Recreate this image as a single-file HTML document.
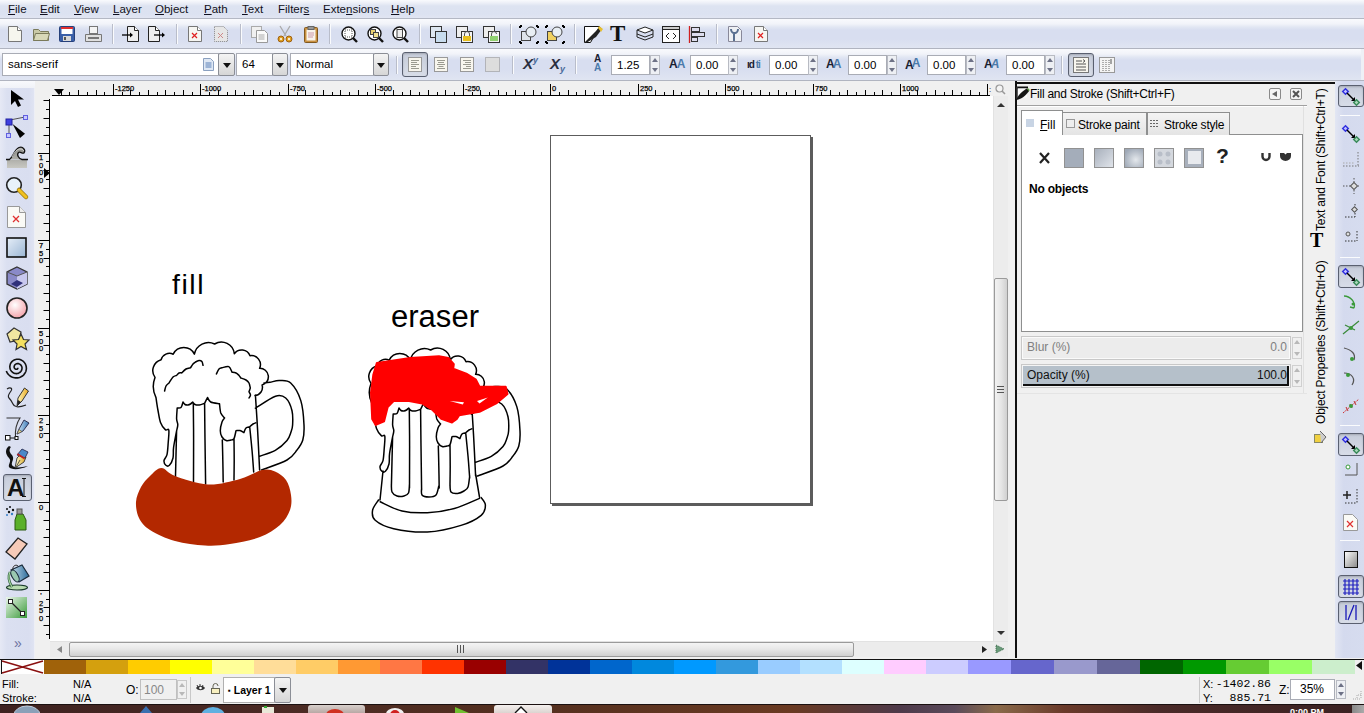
<!DOCTYPE html>
<html><head><meta charset="utf-8"><style>
*{box-sizing:border-box}
body{margin:0;width:1364px;height:713px;overflow:hidden;position:relative;background:#f0f0f0;font-family:"Liberation Sans",sans-serif;font-size:11px;color:#000}
.a{position:absolute}
svg.a{overflow:visible}
.menubar{left:0;top:0;width:1364px;height:19px;background:linear-gradient(#f9fafd 0px,#eceff7 3px,#dde3f1 6px,#dce2f1 14px,#e1e5f2 18px);border-bottom:1px solid #b4b8c4}
.menubar span{position:absolute;top:3px;font-size:11.5px;color:#101020;white-space:nowrap}
.tb{left:0;width:1364px;background:linear-gradient(#f9fafd 0px,#f1f3f9 5px,#e2e7f3 8px,#d8def0 11px,#d8def0 20px,#e0e5f2 100%);border-bottom:1px solid #b0b4c0}
.sep{position:absolute;width:2px;border-left:1px solid #b9bdca;border-right:1px solid #fafbfd}
.entry{position:absolute;background:#fff;border:1px solid #a9acb5;font-size:11.5px;padding-left:5px;white-space:nowrap;overflow:hidden}
.ddb{position:absolute;border:1px solid #8b8e96;background:linear-gradient(#f4f4f4,#d6d6d6);border-radius:2px}
.ddb:after{content:"";position:absolute;left:50%;top:50%;margin-left:-4px;margin-top:-2px;border-left:4px solid transparent;border-right:4px solid transparent;border-top:5px solid #111}
.spin{position:absolute;width:10px;border:1px solid #b8bbc3;background:#eef0f4}
.spin:before{content:"";position:absolute;left:1px;top:2px;border-left:3px solid transparent;border-right:3px solid transparent;border-bottom:4px solid #6d7186}
.spin:after{content:"";position:absolute;left:1px;bottom:2px;border-left:3px solid transparent;border-right:3px solid transparent;border-top:4px solid #6d7186}
.pressed{position:absolute;border:1px solid #5a6070;border-radius:3px;background:linear-gradient(#c6ccda,#d8dde8);box-shadow:inset 0 1px 2px rgba(0,0,0,.18)}
.spinl:before{border-bottom-color:#b8b8b8!important}.spinl:after{border-top-color:#b8b8b8!important}
.mono{font-family:"Liberation Mono",monospace}
.rl{position:absolute;font-size:7.5px;line-height:8px;color:#000;-webkit-text-stroke:0.25px #000}
</style></head><body>

<div class="a menubar">
<span style="left:8px"><u>F</u>ile</span>
<span style="left:40px"><u>E</u>dit</span>
<span style="left:74px"><u>V</u>iew</span>
<span style="left:113px"><u>L</u>ayer</span>
<span style="left:155px"><u>O</u>bject</span>
<span style="left:204px"><u>P</u>ath</span>
<span style="left:242px"><u>T</u>ext</span>
<span style="left:278px">Filter<u>s</u></span>
<span style="left:323px">Exte<u>n</u>sions</span>
<span style="left:391px"><u>H</u>elp</span>
</div>
<div class="a tb" style="top:19px;height:30px"></div>
<div class="a tb" style="top:49px;height:32px"></div>
<div class="sep" style="left:112px;top:24px;height:20px"></div>
<div class="sep" style="left:176px;top:24px;height:20px"></div>
<div class="sep" style="left:240px;top:24px;height:20px"></div>
<div class="sep" style="left:329px;top:24px;height:20px"></div>
<div class="sep" style="left:419px;top:24px;height:20px"></div>
<div class="sep" style="left:510px;top:24px;height:20px"></div>
<div class="sep" style="left:574px;top:24px;height:20px"></div>
<div class="sep" style="left:716px;top:24px;height:20px"></div>
<svg class="a" style="left:7px;top:26px" width="16" height="17" viewBox="0 0 16 17"><path d="M1.5 .5h9l4 4v11h-13z" fill="#f6f6ee" stroke="#777" /><path d="M10.5 .5v4h4" fill="#fff" stroke="#777"/></svg>
<svg class="a" style="left:33px;top:27px" width="17" height="15" viewBox="0 0 17 15"><path d="M.5 2.5v11h15v-9h-8l-2-2z" fill="#c9c9a6" stroke="#7a7a5a"/><path d="M.5 13.5l2-7h14l-2 7z" fill="#d8d8b8" stroke="#7a7a5a"/></svg>
<svg class="a" style="left:59px;top:26px" width="16" height="16" viewBox="0 0 16 16"><rect x=".5" y=".5" width="15" height="15" rx="1" fill="#3a5fa8" stroke="#26407a"/><rect x="2" y="1" width="12" height="2" fill="#e03030"/><rect x="2.5" y="3" width="11" height="5" fill="#fff"/><rect x="4" y="10" width="8" height="5" fill="#d8d8d8"/><rect x="5" y="11" width="2" height="3" fill="#555"/></svg>
<svg class="a" style="left:85px;top:26px" width="17" height="16" viewBox="0 0 17 16"><rect x="4.5" y=".5" width="8" height="7" fill="#f4f4f4" stroke="#777"/><path d="M.5 8.5h16v7h-16z" fill="#e0e0e0" stroke="#777"/><path d="M3 12h11" stroke="#555" stroke-width="1.5"/></svg>
<svg class="a" style="left:122px;top:26px" width="18" height="17" viewBox="0 0 18 17"><path d="M5.5 .5h7l4 4v11h-11z" fill="#eee" stroke="#222"/><path d="M12.5 .5v4h4" fill="#fff" stroke="#222"/><path d="M0 9h9" stroke="#000" stroke-width="1.3"/><path d="M8 6.5l3 2.5-3 2.5z" fill="#000"/></svg>
<svg class="a" style="left:148px;top:26px" width="18" height="17" viewBox="0 0 18 17"><path d="M.5 .5h7l4 4v11h-11z" fill="#eee" stroke="#222"/><path d="M7.5 .5v4h4" fill="#fff" stroke="#222"/><path d="M6 9h9" stroke="#000" stroke-width="1.3"/><path d="M14 6.5l3 2.5-3 2.5z" fill="#000"/></svg>
<svg class="a" style="left:187px;top:26px" width="16" height="17" viewBox="0 0 16 17"><path d="M1.5 .5h9l4 4v11h-13z" fill="#f6f6f2" stroke="#777" /><path d="M10.5 .5v4h4" fill="#fff" stroke="#777"/><path d="M5 7l5 5M10 7l-5 5" stroke="#e02020" stroke-width="1.2"/></svg>
<svg class="a" style="left:213px;top:26px" width="16" height="17" viewBox="0 0 16 17"><path d="M1.5 .5h9l4 4v11h-13z" fill="#e6e6e6" stroke="#888" stroke-dasharray="1 1"/><path d="M5 7l5 5M10 7l-5 5" stroke="#c88" stroke-width="1"/></svg>
<svg class="a" style="left:251px;top:26px" width="17" height="17" viewBox="0 0 17 17"><rect x=".5" y=".5" width="10" height="11" fill="#f0f0f0" stroke="#aaa"/><path d="M5.5 4.5h8l3 3v9h-11z" fill="#fafafa" stroke="#999"/><path d="M7.5 9h6M7.5 11h6M7.5 13h6" stroke="#aaa"/></svg>
<svg class="a" style="left:277px;top:26px" width="16" height="17" viewBox="0 0 16 17"><path d="M3 0l6 10M13 0l-6 10" stroke="#aaa" stroke-width="1.3"/><circle cx="4" cy="13" r="3" fill="#e0a020" stroke="#a06010"/><circle cx="12" cy="13" r="3" fill="#e0a020" stroke="#a06010"/><circle cx="4" cy="13" r="1" fill="#fff"/><circle cx="12" cy="13" r="1" fill="#fff"/></svg>
<svg class="a" style="left:303px;top:26px" width="16" height="17" viewBox="0 0 16 17"><rect x="1.5" y="1.5" width="13" height="15" rx="1" fill="#c89040" stroke="#805820"/><rect x="3.5" y="3.5" width="9" height="11" fill="#f8f4ec"/><rect x="5" y=".5" width="6" height="3" fill="#999" stroke="#666"/><path d="M5 7h6M5 9h6M5 11h5" stroke="#c9a"/></svg>
<svg class="a" style="left:341px;top:26px" width="17" height="17" viewBox="0 0 17 17"><circle cx="7.5" cy="7.5" r="6.5" fill="#fff" stroke="#111" stroke-width="1.4"/><rect x="4" y="4" width="7" height="7" fill="none" stroke="#555" stroke-dasharray="1 1"/><path d="M12 12l4 4" stroke="#111" stroke-width="2.4"/></svg>
<svg class="a" style="left:367px;top:26px" width="17" height="17" viewBox="0 0 17 17"><circle cx="7.5" cy="7.5" r="6.5" fill="#fff" stroke="#111" stroke-width="1.4"/><rect x="3.5" y="3.5" width="5" height="5" fill="#e8d070" stroke="#444"/><rect x="6.5" y="6.5" width="5" height="5" fill="#f0e090" stroke="#444"/><path d="M12 12l4 4" stroke="#111" stroke-width="2.4"/></svg>
<svg class="a" style="left:392px;top:26px" width="17" height="17" viewBox="0 0 17 17"><circle cx="7.5" cy="7.5" r="6.5" fill="#fff" stroke="#111" stroke-width="1.4"/><rect x="5" y="3.5" width="5.5" height="8" fill="#eee" stroke="#444"/><path d="M12 12l4 4" stroke="#111" stroke-width="2.4"/></svg>
<svg class="a" style="left:430px;top:26px" width="18" height="17" viewBox="0 0 18 17"><rect x=".5" y=".5" width="11" height="11" fill="#dde6f0" stroke="#333"/><rect x="5.5" y="5.5" width="11" height="11" fill="#c8dcee" stroke="#333"/></svg>
<svg class="a" style="left:456px;top:26px" width="18" height="17" viewBox="0 0 18 17"><rect x=".5" y=".5" width="11" height="11" fill="#eee" stroke="#333"/><rect x="5.5" y="5.5" width="11" height="11" fill="#f4f4f4" stroke="#333"/><rect x="7" y="10" width="8" height="5" fill="#e8c020"/><path d="M8.5 10v-2a2.5 2.5 0 0 1 5 0v2" fill="none" stroke="#555"/></svg>
<svg class="a" style="left:483px;top:26px" width="18" height="17" viewBox="0 0 18 17"><rect x=".5" y=".5" width="11" height="11" fill="#eee" stroke="#333"/><rect x="5.5" y="5.5" width="11" height="11" fill="#f4f4f4" stroke="#333"/><rect x="7" y="10" width="8" height="5" fill="#90d070"/><path d="M8.5 10v-2a2.5 2.5 0 0 1 5 0" fill="none" stroke="#555"/></svg>
<svg class="a" style="left:520px;top:26px" width="18" height="17" viewBox="0 0 18 17"><rect x="1.5" y="5.5" width="9" height="9" fill="#dfe4ea" stroke="#444"/><circle cx="11" cy="6" r="5" fill="#e8eef4" stroke="#444"/><path d="M0 0h2M0 0v2M16 0h2M18 0v2M0 17h2M0 15v2M16 17h2M18 15v2" stroke="#000" stroke-width="2"/></svg>
<svg class="a" style="left:546px;top:26px" width="18" height="17" viewBox="0 0 18 17"><rect x="1.5" y="5.5" width="9" height="9" fill="#f0d060" stroke="#444"/><circle cx="11" cy="6" r="5" fill="#e8eef4" stroke="#444"/><path d="M0 0h2M0 0v2M16 0h2M18 0v2M0 17h2M0 15v2M16 17h2M18 15v2" stroke="#000" stroke-width="2"/></svg>
<svg class="a" style="left:584px;top:26px" width="19" height="17" viewBox="0 0 19 17"><path d="M.5 .5h15l-9 16h-6z" fill="#fff" stroke="#111"/><path d="M1 16l10-10 5 -5 2 2-6 8-10 6z" fill="#222"/><path d="M15 0l4 3-2 3-3-4z" fill="#e8c030"/></svg>
<div class="a" style="left:610px;top:22px;font-family:'Liberation Serif',serif;font-weight:bold;font-size:23px;line-height:23px;color:#111">T</div>
<svg class="a" style="left:636px;top:27px" width="18" height="15" viewBox="0 0 18 15"><path d="M1 3l8-3 8 3-8 3z" fill="#fff" stroke="#222"/><path d="M1 7l8 3 8-3M1 10l8 3 8-3M1 3v7M17 3v7" fill="none" stroke="#222"/></svg>
<svg class="a" style="left:662px;top:26px" width="18" height="17" viewBox="0 0 18 17"><rect x=".5" y=".5" width="17" height="16" fill="#fff" stroke="#222"/><rect x=".5" y=".5" width="17" height="3" fill="#ccc" stroke="#222"/><path d="M7 7l-3 3 3 3M11 7l3 3-3 3" fill="none" stroke="#222"/></svg>
<svg class="a" style="left:688px;top:26px" width="18" height="17" viewBox="0 0 18 17"><path d="M1.5 0v17" stroke="#d02020" stroke-width="1.3"/><rect x="3.5" y="1.5" width="8" height="4" fill="#dde" stroke="#333"/><rect x="3.5" y="6.5" width="13" height="4" fill="#dde" stroke="#333"/><rect x="3.5" y="11.5" width="6" height="4" fill="#dde" stroke="#333"/></svg>
<svg class="a" style="left:727px;top:26px" width="16" height="17" viewBox="0 0 16 17"><path d="M1.5 .5h9l4 4v11h-13z" fill="#eef0f4" stroke="#889"/><path d="M4 3c0 3 2 4 3 4v8M11 3c0 3-2 4-3 4" fill="none" stroke="#5a7090" stroke-width="2"/></svg>
<svg class="a" style="left:753px;top:26px" width="16" height="17" viewBox="0 0 16 17"><path d="M1.5 .5h9l4 4v11h-13z" fill="#f6f6f2" stroke="#777" /><path d="M10.5 .5v4h4" fill="#fff" stroke="#777"/><path d="M5 7l5 5M10 7l-5 5" stroke="#e02020" stroke-width="1.2"/></svg>
<div class="a" style="left:1361px;top:49px;width:3px;height:31px;background:#eef0f6"></div>
<div class="entry" style="left:2px;top:53px;width:217px;height:23px;line-height:21px">sans-serif</div>
<svg class="a" style="left:203px;top:58px" width="11" height="13" viewBox="0 0 11 13"><path d="M.5 .5h7l3 3v9h-10z" fill="#dfe8f4" stroke="#8aa0c0"/><path d="M2.5 5h6M2.5 7h6M2.5 9h6" stroke="#5a80b8"/></svg>
<div class="ddb" style="left:218px;top:53px;width:17px;height:23px"></div>
<div class="entry" style="left:236px;top:53px;width:37px;height:23px;line-height:21px">64</div>
<div class="ddb" style="left:272px;top:53px;width:16px;height:23px"></div>
<div class="entry" style="left:290px;top:53px;width:84px;height:23px;line-height:21px">Normal</div>
<div class="ddb" style="left:373px;top:53px;width:16px;height:23px"></div>
<div class="sep" style="left:396px;top:56px;height:18px"></div>
<div class="sep" style="left:512px;top:56px;height:18px"></div>
<div class="sep" style="left:575px;top:56px;height:18px"></div>
<div class="sep" style="left:1061px;top:56px;height:18px"></div>
<div class="pressed" style="left:402px;top:52px;width:26px;height:25px"></div>
<svg class="a" style="left:408px;top:57px" width="14" height="15" viewBox="0 0 14 15"><rect x=".5" y=".5" width="13" height="14" fill="#f8f6ee" stroke="#999"/><path d="M3 3.5h8" stroke="#9a9a90"/><path d="M3 5.5h6" stroke="#9a9a90"/><path d="M3 7.5h8" stroke="#9a9a90"/><path d="M3 9.5h5" stroke="#9a9a90"/><path d="M3 11.5h8" stroke="#9a9a90"/></svg>
<svg class="a" style="left:434px;top:57px" width="14" height="15" viewBox="0 0 14 15"><rect x=".5" y=".5" width="13" height="14" fill="#f8f6ee" stroke="#999"/><path d="M3 3.5h8" stroke="#9a9a90"/><path d="M4 5.5h6" stroke="#9a9a90"/><path d="M3 7.5h8" stroke="#9a9a90"/><path d="M4.5 9.5h5" stroke="#9a9a90"/><path d="M3 11.5h8" stroke="#9a9a90"/></svg>
<svg class="a" style="left:460px;top:57px" width="14" height="15" viewBox="0 0 14 15"><rect x=".5" y=".5" width="13" height="14" fill="#f8f6ee" stroke="#999"/><path d="M3 3.5h8" stroke="#9a9a90"/><path d="M5 5.5h6" stroke="#9a9a90"/><path d="M3 7.5h8" stroke="#9a9a90"/><path d="M6 9.5h5" stroke="#9a9a90"/><path d="M3 11.5h8" stroke="#9a9a90"/></svg>
<svg class="a" style="left:485px;top:57px" width="15" height="15" viewBox="0 0 15 15"><rect x=".5" y=".5" width="14" height="14" fill="#ddd" stroke="#888" stroke-dasharray="1 1"/></svg>
<div class="a" style="left:523px;top:55px;font-weight:bold;font-style:italic;font-size:15px;color:#2a2f40">X<sup style="font-size:9px;color:#4a6a9a;vertical-align:6px">y</sup></div>
<div class="a" style="left:550px;top:55px;font-weight:bold;font-style:italic;font-size:15px;color:#2a2f40">X<sub style="font-size:9px;color:#4a6a9a;vertical-align:-3px">y</sub></div>
<div class="a" style="left:594px;top:54px;font-weight:bold;font-size:10px;line-height:9px;color:#1a2030">A<br><span style="color:#4a7aaa">A</span></div>
<div class="a" style="left:669px;top:57px;font-weight:bold;font-size:12px;color:#1a2030;letter-spacing:-1px">A<span style="color:#4a7aaa">A</span></div>
<div class="a" style="left:747px;top:59px;font-weight:bold;font-size:10px;color:#1a2030;letter-spacing:-1px">ıd <span style="color:#4a7aaa">ti</span></div>
<div class="a" style="left:826px;top:57px;font-weight:bold;font-size:12px;color:#1a2030;letter-spacing:-2px">A<span style="color:#4a7aaa">A</span></div>
<div class="a" style="left:905px;top:56px;font-weight:bold;font-size:12px;color:#1a2030;letter-spacing:-2px">A<span style="color:#4a7aaa;vertical-align:2px">A</span></div>
<div class="a" style="left:984px;top:57px;font-weight:bold;font-size:12px;color:#1a2030;letter-spacing:-2px">A<span style="color:#4a7aaa;font-style:italic">A</span></div>
<div class="entry" style="left:611px;top:55px;width:39px;height:20px;line-height:18px">1.25</div>
<div class="spin" style="left:650px;top:55px;height:20px"></div>
<div class="entry" style="left:690px;top:55px;width:39px;height:20px;line-height:18px">0.00</div>
<div class="spin" style="left:728px;top:55px;height:20px"></div>
<div class="entry" style="left:769px;top:55px;width:40px;height:20px;line-height:18px">0.00</div>
<div class="spin" style="left:808px;top:55px;height:20px"></div>
<div class="entry" style="left:848px;top:55px;width:39px;height:20px;line-height:18px">0.00</div>
<div class="spin" style="left:887px;top:55px;height:20px"></div>
<div class="entry" style="left:927px;top:55px;width:39px;height:20px;line-height:18px">0.00</div>
<div class="spin" style="left:966px;top:55px;height:20px"></div>
<div class="entry" style="left:1006px;top:55px;width:39px;height:20px;line-height:18px">0.00</div>
<div class="spin" style="left:1045px;top:55px;height:20px"></div>
<div class="pressed" style="left:1068px;top:53px;width:26px;height:24px"></div>
<svg class="a" style="left:1073px;top:57px" width="16" height="16" viewBox="0 0 16 16"><rect x=".5" y=".5" width="15" height="15" fill="#f8f6ee" stroke="#777"/><path d="M3 4h6M3 7h10M3 10h10M3 13h10" stroke="#555"/><path d="M10 2.5l2 1.5-2 1.5" fill="none" stroke="#555"/></svg>
<svg class="a" style="left:1099px;top:57px" width="16" height="16" viewBox="0 0 16 16"><rect x=".5" y=".5" width="15" height="15" fill="#f4f4f4" stroke="#999"/><path d="M4 3v11M7 3v11M10 3v11" stroke="#666" stroke-dasharray="1 1"/><path d="M12 2v5" stroke="#555"/></svg>
<div class="a" style="left:0;top:81px;width:35px;height:7px;background:linear-gradient(#f8f9fc,#f0f2f8)"></div>
<div class="a" style="left:0;top:88px;width:34px;height:571px;background:linear-gradient(90deg,#e6e9f5,#dbe0f1 20%,#d9def0 85%,#e0e4f2)"></div>
<div class="a" style="left:34px;top:88px;width:3px;height:571px;background:linear-gradient(90deg,#eceef6,#f2f2f4)"></div>
<div class="a" style="left:35px;top:81px;width:980px;height:578px;background:#f0f0f0"></div>
<div class="a" style="left:50px;top:96px;width:943px;height:545px;background:#fff"></div>
<svg class="a" style="left:50px;top:81px" width="945" height="16" viewBox="0 0 945 16"><path d="M2 95.5H940" transform="translate(0,-81)" stroke="#000"/><path d="M11.5 90V95 M19.5 92V95 M28.5 90V95 M37.5 92V95 M46.5 90V95 M54.5 92V95 M63.5 84V95 M72.5 92V95 M80.5 90V95 M89.5 92V95 M98.5 90V95 M107.5 92V95 M115.5 90V95 M124.5 92V95 M133.5 90V95 M142.5 92V95 M150.5 84V95 M159.5 92V95 M168.5 90V95 M177.5 92V95 M185.5 90V95 M194.5 92V95 M203.5 90V95 M212.5 92V95 M220.5 90V95 M229.5 92V95 M238.5 84V95 M247.5 92V95 M255.5 90V95 M264.5 92V95 M273.5 90V95 M282.5 92V95 M290.5 90V95 M299.5 92V95 M308.5 90V95 M317.5 92V95 M325.5 84V95 M334.5 92V95 M343.5 90V95 M352.5 92V95 M360.5 90V95 M369.5 92V95 M378.5 90V95 M387.5 92V95 M395.5 90V95 M404.5 92V95 M413.5 84V95 M422.5 92V95 M430.5 90V95 M439.5 92V95 M448.5 90V95 M456.5 92V95 M465.5 90V95 M474.5 92V95 M483.5 90V95 M491.5 92V95 M500.5 84V95 M509.5 92V95 M518.5 90V95 M526.5 92V95 M535.5 90V95 M544.5 92V95 M553.5 90V95 M561.5 92V95 M570.5 90V95 M579.5 92V95 M588.5 84V95 M596.5 92V95 M605.5 90V95 M614.5 92V95 M623.5 90V95 M631.5 92V95 M640.5 90V95 M649.5 92V95 M658.5 90V95 M666.5 92V95 M675.5 84V95 M684.5 92V95 M693.5 90V95 M701.5 92V95 M710.5 90V95 M719.5 92V95 M728.5 90V95 M736.5 92V95 M745.5 90V95 M754.5 92V95 M763.5 84V95 M771.5 92V95 M780.5 90V95 M789.5 92V95 M797.5 90V95 M806.5 92V95 M815.5 90V95 M824.5 92V95 M832.5 90V95 M841.5 92V95 M850.5 84V95 M859.5 92V95 M867.5 90V95 M876.5 92V95 M885.5 90V95 M894.5 92V95 M902.5 90V95 M911.5 92V95 M920.5 90V95 M929.5 92V95 M937.5 84V95" transform="translate(0,-81)" stroke="#000"/></svg>
<div class="rl" style="left:115px;top:85px">-1250</div>
<div class="rl" style="left:202px;top:85px">-1000</div>
<div class="rl" style="left:290px;top:85px">-750</div>
<div class="rl" style="left:377px;top:85px">-500</div>
<div class="rl" style="left:465px;top:85px">-250</div>
<div class="rl" style="left:552px;top:85px">0</div>
<div class="rl" style="left:640px;top:85px">250</div>
<div class="rl" style="left:727px;top:85px">500</div>
<div class="rl" style="left:815px;top:85px">750</div>
<div class="rl" style="left:902px;top:85px">1000</div>
<svg class="a" style="left:54px;top:89px" width="10" height="6" viewBox="0 0 10 6"><path d="M0 0h10l-5 6z" fill="#000"/></svg>
<div class="a" style="left:989px;top:86px;font-size:8px;line-height:8px">:</div>
<svg class="a" style="left:995px;top:84px" width="11" height="11" viewBox="0 0 11 11"><circle cx="4.5" cy="4.5" r="3.5" fill="#f4f4f4" stroke="#999" stroke-width="1.2"/><path d="M7 7l3 3" stroke="#999" stroke-width="1.6"/></svg>
<svg class="a" style="left:0px;top:0px" width="52" height="645" viewBox="0 0 52 645"><path d="M49.5 99V639" stroke="#000"/><path d="M43.5 100.5H49 M46 109.5H49 M43.5 118.5H49 M46 127.5H49 M43.5 135.5H49 M46 144.5H49 M38 153.5H49 M46 161.5H49 M43.5 170.5H49 M46 179.5H49 M43.5 188.5H49 M46 196.5H49 M43.5 205.5H49 M46 214.5H49 M43.5 223.5H49 M46 231.5H49 M38 240.5H49 M46 249.5H49 M43.5 258.5H49 M46 266.5H49 M43.5 275.5H49 M46 284.5H49 M43.5 293.5H49 M46 301.5H49 M43.5 310.5H49 M46 319.5H49 M38 328.5H49 M46 336.5H49 M43.5 345.5H49 M46 354.5H49 M43.5 363.5H49 M46 371.5H49 M43.5 380.5H49 M46 389.5H49 M43.5 398.5H49 M46 406.5H49 M38 415.5H49 M46 424.5H49 M43.5 433.5H49 M46 441.5H49 M43.5 450.5H49 M46 459.5H49 M43.5 468.5H49 M46 476.5H49 M43.5 485.5H49 M46 494.5H49 M38 502.5H49 M46 511.5H49 M43.5 520.5H49 M46 529.5H49 M43.5 537.5H49 M46 546.5H49 M43.5 555.5H49 M46 564.5H49 M43.5 572.5H49 M46 581.5H49 M38 590.5H49 M46 599.5H49 M43.5 607.5H49 M46 616.5H49 M43.5 625.5H49 M46 634.5H49" stroke="#000"/></svg>
<div class="rl" style="left:38px;top:154px;width:6px;text-align:center;line-height:7.5px;word-break:break-all">1<br>0<br>0<br>0</div>
<div class="rl" style="left:38px;top:242px;width:6px;text-align:center;line-height:7.5px;word-break:break-all">7<br>5<br>0</div>
<div class="rl" style="left:38px;top:330px;width:6px;text-align:center;line-height:7.5px;word-break:break-all">5<br>0<br>0</div>
<div class="rl" style="left:38px;top:417px;width:6px;text-align:center;line-height:7.5px;word-break:break-all">2<br>5<br>0</div>
<div class="rl" style="left:38px;top:504px;width:6px;text-align:center;line-height:7.5px;word-break:break-all">0</div>
<div class="rl" style="left:38px;top:592px;width:6px;text-align:center;line-height:7.5px;word-break:break-all">'<br>2<br>5<br>0</div>
<svg class="a" style="left:44px;top:168px" width="6" height="10" viewBox="0 0 6 10"><path d="M0 0v10l6-5z" fill="#000"/></svg>
<div class="a" style="left:993px;top:96px;width:15px;height:545px;background:#ececec;border-left:1px solid #e2e2e2"></div>
<div class="a" style="left:994px;top:278px;width:14px;height:223px;border:1px solid #9a9a9a;border-radius:2px;background:linear-gradient(90deg,#f2f2f2,#e6e6e6 50%,#d0d0d0)"></div>
<svg class="a" style="left:997px;top:386px" width="8" height="7" viewBox="0 0 8 7"><path d="M0 .5h7M0 3.5h7M0 6.5h7" stroke="#555"/></svg>
<svg class="a" style="left:997px;top:102px" width="8" height="5" viewBox="0 0 8 5"><path d="M0 5l4-4 4 4z" fill="#333"/></svg>
<svg class="a" style="left:997px;top:631px" width="8" height="5" viewBox="0 0 8 5"><path d="M0 0h8l-4 4z" fill="#333"/></svg>
<div class="a" style="left:50px;top:641px;width:958px;height:16px;background:#ececec;border-top:1px solid #e2e2e2"></div>
<div class="a" style="left:69px;top:642px;width:785px;height:15px;border:1px solid #9a9a9a;border-radius:2px;background:linear-gradient(#f4f4f4,#e8e8e8 45%,#d0d0d0)"></div>
<svg class="a" style="left:457px;top:645px" width="7" height="8" viewBox="0 0 7 8"><path d="M.5 0v8M3.5 0v8M6.5 0v8" stroke="#555"/></svg>
<svg class="a" style="left:57px;top:646px" width="5" height="7" viewBox="0 0 5 7"><path d="M5 0v7l-5-3.5z" fill="#888"/></svg>
<svg class="a" style="left:982px;top:646px" width="5" height="7" viewBox="0 0 5 7"><path d="M0 0v7l5-3.5z" fill="#222"/></svg>
<svg class="a" style="left:995px;top:644px" width="10" height="10" viewBox="0 0 10 10"><path d="M1 1l8 4-8 4z" fill="#6a9a7a" stroke="#3a6a4a" stroke-dasharray="1 1"/></svg>
<div class="a" style="left:550px;top:135px;width:261px;height:369px;border:1px solid #5c5c5c;box-shadow:2px 2px 0 #5c5c5c;background:#fff"></div>
<svg class="a" style="left:10px;top:89px" width="12" height="19" viewBox="0 0 12 19"><path d="M1 1v15l4-4 3 6 3-1.5-3-6h6z" fill="#000"/></svg>
<svg class="a" style="left:4px;top:115px" width="26" height="24" viewBox="0 0 26 24"><path d="M5 7v12M6 5l15-3" stroke="#555" stroke-width="1"/><rect x="2" y="4" width="6" height="6" fill="#4040e0" stroke="#2020a0"/><rect x="19.5" y=".5" width="4" height="4" fill="#c8c8ff" stroke="#6060e0"/><rect x="2.5" y="18.5" width="4" height="4" fill="#c8c8ff" stroke="#6060e0"/><path d="M8.6 9L21 18.7 16 23z" fill="#000"/></svg>
<svg class="a" style="left:0px;top:140px" width="34" height="34" viewBox="0 0 34 34"><defs><linearGradient id="gtw" x1="0" y1="0" x2="0" y2="1"><stop offset="0" stop-color="#8a8a86"/><stop offset="1" stop-color="#c8c8c2"/></linearGradient></defs><g transform="translate(0,-140)"><path d="M7 160H27V168H7z M10 159.5 C13 157 14 150 19 147.5 C23 146 26 150 24 153 C22 154 20 151 18.5 152.5 C16.5 154.5 18.5 159 22 159.5z" fill="url(#gtw)"/><path d="M6 159.5H9.5 C13 157 14 150 19 147.5 C23 146 26 150 24 153 C22 154 20 151 18.5 152.5 C16.5 154.5 18.5 159 22 159.5H28" fill="none" stroke="#111" stroke-width="1.3"/><path d="M12 157 C14 153 16 149.5 19.5 149 C22 148.5 23.5 150 23.5 151" fill="none" stroke="#fff" stroke-width=".7"/></g></svg>
<svg class="a" style="left:5px;top:176px" width="24" height="24" viewBox="0 0 24 24"><circle cx="9" cy="9" r="7.3" fill="#e8f2fa" stroke="#222" stroke-width="1.6"/><path d="M14 14l7 7" stroke="#9a7a10" stroke-width="4.5" stroke-linecap="round"/><path d="M14 14l7 7" stroke="#f0c020" stroke-width="3" stroke-linecap="round"/></svg>
<svg class="a" style="left:7px;top:206px" width="19" height="22" viewBox="0 0 19 22"><path d="M.5 .5h12l6 6v15H.5z" fill="#fafaf6" stroke="#999"/><path d="M12.5 .5v6h6" fill="#eee" stroke="#999"/><path d="M6 10l6 6M12 10l-6 6" stroke="#e03030" stroke-width="1.3"/></svg>
<svg class="a" style="left:6px;top:237px" width="21" height="21" viewBox="0 0 21 21"><defs><linearGradient id="grc" x1="0" y1="0" x2="1" y2="1"><stop offset="0" stop-color="#e6eef8"/><stop offset="1" stop-color="#9ab6d4"/></linearGradient></defs><rect x="1" y="1" width="19" height="19" fill="url(#grc)" stroke="#111" stroke-width="1.6"/></svg>
<svg class="a" style="left:6px;top:266px" width="22" height="24" viewBox="0 0 22 24"><path d="M11 1l10 5v12l-10 5-10-5V6z" fill="#8a8ac8" stroke="#333" stroke-width="1.3"/><path d="M11 10l10-4v12l-10 5z" fill="#c8c8ee"/><path d="M1 6l10 4 10-4" fill="none" stroke="#555"/><path d="M5 18l6-4 6 3-6 4z" fill="#30307a"/></svg>
<svg class="a" style="left:6px;top:297px" width="22" height="22" viewBox="0 0 22 22"><defs><radialGradient id="gci" cx=".4" cy=".35" r=".7"><stop offset="0" stop-color="#fff"/><stop offset="1" stop-color="#f4a0a8"/></radialGradient></defs><circle cx="11" cy="11" r="10" fill="url(#gci)" stroke="#222" stroke-width="1.6"/></svg>
<svg class="a" style="left:5px;top:326px" width="25" height="24" viewBox="0 0 25 24"><path d="M2 8l7-6 7 4-2 8-9 2z" fill="#f2e6a0" stroke="#333" stroke-width="1.2"/><path d="M16 8l2.5 5.5 5.5.5-4 4 1.5 5.5-5.5-3-5 3 1-5.5-4-4 5.5-.5z" fill="#f4e060" stroke="#333" stroke-width="1.2"/></svg>
<svg class="a" style="left:5px;top:356px" width="24" height="23" viewBox="0 0 24 23"><path d="M12.8 11.7 L12.8 11.9 L12.8 12.0 L12.8 12.1 L12.8 12.2 L12.8 12.3 L12.7 12.5 L12.7 12.6 L12.6 12.7 L12.5 12.8 L12.4 13.0 L12.2 13.1 L12.1 13.1 L11.9 13.2 L11.7 13.3 L11.5 13.3 L11.3 13.3 L11.1 13.3 L10.9 13.2 L10.7 13.2 L10.5 13.1 L10.3 13.0 L10.1 12.8 L9.9 12.7 L9.7 12.5 L9.6 12.3 L9.4 12.0 L9.3 11.8 L9.2 11.5 L9.2 11.2 L9.1 10.9 L9.2 10.6 L9.2 10.3 L9.3 10.0 L9.4 9.7 L9.5 9.4 L9.7 9.1 L9.9 8.8 L10.2 8.5 L10.5 8.3 L10.8 8.1 L11.1 7.9 L11.4 7.8 L11.8 7.7 L12.2 7.6 L12.6 7.6 L13.0 7.6 L13.4 7.6 L13.9 7.8 L14.3 7.9 L14.7 8.1 L15.0 8.3 L15.4 8.6 L15.7 8.9 L16.0 9.3 L16.3 9.7 L16.5 10.1 L16.7 10.5 L16.9 11.0 L17.0 11.5 L17.0 12.0 L17.0 12.5 L16.9 13.1 L16.8 13.6 L16.6 14.1 L16.4 14.6 L16.1 15.1 L15.8 15.5 L15.4 15.9 L15.0 16.3 L14.5 16.6 L14.0 16.9 L13.5 17.2 L12.9 17.4 L12.3 17.5 L11.7 17.6 L11.1 17.6 L10.4 17.5 L9.8 17.4 L9.2 17.2 L8.6 17.0 L8.0 16.6 L7.5 16.3 L7.0 15.8 L6.5 15.3 L6.1 14.8 L5.7 14.2 L5.4 13.6 L5.1 12.9 L5.0 12.2 L4.9 11.5 L4.8 10.8 L4.9 10.1 L5.0 9.3 L5.2 8.6 L5.4 7.9 L5.8 7.2 L6.2 6.5 L6.7 5.9 L7.2 5.4 L7.8 4.9 L8.5 4.4 L9.2 4.0 L9.9 3.7 L10.7 3.5 L11.6 3.3 L12.4 3.2 L13.2 3.3 L14.1 3.3 L14.9 3.5 L15.7 3.8 L16.5 4.2 L17.3 4.6 L18.0 5.1 L18.7 5.7 L19.3 6.4 L19.8 7.1 L20.3 7.9 L20.7 8.7 L21.0 9.6 L21.2 10.5 L21.3 11.4 L21.4 12.4 L21.3 13.3 L21.1 14.3 L20.9 15.2 L20.5 16.1 L20.0 17.0 L19.5 17.8 L18.9 18.6 L18.2 19.3 L17.4 20.0 L16.5 20.5 L15.6 21.0 L14.6 21.4 L13.6 21.7 L12.6 21.9 L11.6 21.9 L10.5 21.9 L9.4 21.8 L8.4 21.5 L7.4 21.2 L6.4 20.7 L5.4 20.2 L4.5 19.5 L3.7 18.8 L3.0 17.9 L2.3 17.0 L1.7 16.0 L1.3 15.0" fill="none" stroke="#111" stroke-width="1.6"/></svg>
<svg class="a" style="left:0px;top:380px" width="34" height="94" viewBox="0 0 34 94"><g transform="translate(0,-380)"><defs><linearGradient id="gpc" x1="0" y1="0" x2="1" y2="0"><stop offset="0" stop-color="#fff8c0"/><stop offset="1" stop-color="#e8a820"/></linearGradient><linearGradient id="gpn" x1="0" y1="0" x2="1" y2="0"><stop offset="0" stop-color="#d8ecf8"/><stop offset="1" stop-color="#3a78b8"/></linearGradient><linearGradient id="gcn" x1="0" y1="0" x2="1" y2="0"><stop offset="0" stop-color="#fffad8"/><stop offset="1" stop-color="#d8a820"/></linearGradient></defs><path d="M7 389 C10 387 13 388 11 391 C9 394 7 396 9 398 C11 400 12 402 13 404 C14 407 18 408 26 405" fill="none" stroke="#222" stroke-width="1.2"/><path d="M17 406 L18 398 L24.5 388 L28.5 391 L22 401z" fill="url(#gpc)" stroke="#333" stroke-width="1"/><path d="M17 406 L18 400 L21 402z" fill="#222"/><path d="M6.5 418 H20 C16 424 15 430 15.5 437" fill="none" stroke="#333" stroke-width="1.1"/><rect x="5.5" y="435.5" width="4.5" height="4.5" fill="#fff" stroke="#111"/><path d="M10 438H15" stroke="#111"/><rect x="15" y="436.5" width="3" height="3" fill="#fff" stroke="#111"/><path d="M17 434 L19 429 L24 420 L29 423 L23 431z" fill="url(#gpn)" stroke="#224" stroke-width=".9"/><path d="M17 434 L19 429.5 L22 431.5z" fill="#e8d890" stroke="#444" stroke-width=".6"/><path d="M9 446 C5 449 5 454 9 458 C12 461 8 464 9 467 C11 470 20 470 28 466 C20 468 13 468 12 465 C11 462 15 459 12 455 C9 452 9 449 11 447z" fill="#111"/><path d="M15 468 L17 458 L21 454 L26 457 L24 462z" fill="url(#gcn)" stroke="#333" stroke-width=".9"/><path d="M17 455 L22 449 L28 452 L25 458z" fill="#4a88c8" stroke="#224" stroke-width=".8"/><path d="M17.5 454 L24.5 458.5" stroke="#c02020" stroke-width="1.6"/><path d="M16 467 L20 460" stroke="#333" stroke-width=".8"/></g></svg>
<div class="pressed" style="left:3px;top:474px;width:29px;height:27px"></div>
<div class="a" style="left:7px;top:474px;font-weight:bold;font-size:24px;line-height:27px;color:#111">A</div>
<svg class="a" style="left:22px;top:478px" width="5" height="20" viewBox="0 0 5 20"><path d="M0 .5h4M2 .5v18M0 18.5h4" stroke="#111"/></svg>
<svg class="a" style="left:5px;top:506px" width="24" height="25" viewBox="0 0 24 25"><circle cx="2" cy="3" r="1" fill="#111"/><circle cx="5" cy="1" r="1" fill="#111"/><circle cx="4" cy="6" r="1.2" fill="#111"/><circle cx="8" cy="4" r="1.2" fill="#111"/><circle cx="2" cy="9" r="1" fill="#3a80c8"/><circle cx="7" cy="8" r="1.2" fill="#3a80c8"/><path d="M12 8h6l3 6v10h-11v-10z" fill="#5ab02a" stroke="#2a5a10"/><rect x="12" y="3" width="5" height="5" fill="#999" stroke="#555"/></svg>
<svg class="a" style="left:5px;top:537px" width="24" height="23" viewBox="0 0 24 23"><path d="M1 15l12-14 9 6-12 15z" fill="#f6cab8" stroke="#222" stroke-width="1.3"/></svg>
<svg class="a" style="left:4px;top:564px" width="26" height="27" viewBox="0 0 26 27"><defs><linearGradient id="gbk" x1="0" y1="0" x2="1" y2="0"><stop offset="0" stop-color="#c8e0ee"/><stop offset="1" stop-color="#2a6a9a"/></linearGradient></defs><ellipse cx="13" cy="23.5" rx="10.5" ry="2.5" fill="#b8dcb0" stroke="#1a3a2a" stroke-width="1.2"/><path d="M6 8 C4 12 5 18 8 23" fill="none" stroke="#2a5a3a" stroke-width="2.5"/><path d="M6 8 C4 12 5 18 8 23" fill="none" stroke="#a8d8a0" stroke-width="1.2"/><path d="M7 6 L18 1 L25 12 L15 18 z" fill="url(#gbk)" stroke="#1a2a3a" stroke-width="1.2"/><ellipse cx="11" cy="12" rx="3" ry="6.5" transform="rotate(-30 11 12)" fill="#9ac8b0" stroke="#1a2a3a" stroke-width="1.1"/><path d="M9 6 C8 2 12 0 14 2" fill="none" stroke="#222" stroke-width="1"/></svg>
<svg class="a" style="left:6px;top:597px" width="21" height="21" viewBox="0 0 21 21"><defs><linearGradient id="ggr" x1="0" y1="0" x2="1" y2="1"><stop offset="0" stop-color="#eaf6ea"/><stop offset="1" stop-color="#3a9a3a"/></linearGradient></defs><rect x="0" y="0" width="21" height="21" fill="url(#ggr)"/><path d="M5 5l11 11" stroke="#222" stroke-width="1.3"/><rect x="2.5" y="2.5" width="4" height="4" fill="#fff" stroke="#222"/><rect x="14.5" y="14.5" width="4" height="4" fill="#fff" stroke="#222"/></svg>
<div class="a" style="left:14px;top:635px;font-size:14px;color:#6a70a0;letter-spacing:-1px">&#187;</div>
<svg class="a" style="left:0;top:0" width="1364" height="713" viewBox="0 0 1364 713"><defs><clipPath id="cv"><rect x="50" y="96" width="943" height="545"/></clipPath></defs><g clip-path="url(#cv)"><g transform="translate(0,0)"><path d="M176.6 430.8 C176.1 433.6 174.2 442.9 173.6 447.4 C173.0 451.9 173.7 455.0 173.0 458.0 C172.3 461.0 170.6 464.1 169.4 465.3 C168.2 466.5 166.8 466.1 165.9 465.3 C165.0 464.5 163.8 462.4 164.0 460.6 C164.2 458.8 166.3 457.6 167.0 454.6 C167.7 451.6 167.9 446.8 168.2 442.7 C168.5 438.6 169.3 432.4 168.8 430.2 C168.3 428.0 166.7 430.9 165.3 429.6 C163.9 428.3 161.7 425.6 160.5 422.4 C159.3 419.2 158.8 414.6 158.0 410.5 C157.2 406.4 156.3 399.8 156.0 397.6 A25 25 0 0 1 155 377.4 A11.4 11.4 0 0 1 161.1 359.7 A8.8 8.8 0 0 1 173.2 354.2 A11.8 11.8 0 0 1 194.4 354.2 A14.3 14.3 0 0 1 214.6 344 A13 13 0 0 1 234.3 353.7 A9 9 0 0 1 250 355.7 A9 9 0 0 1 259.6 368.3 A8.5 8.5 0 0 1 262.1 385 A8.3 8.3 0 0 1 255 395.6 M164.6 391 C164.8 390.2 165.3 387.3 166.0 386.0 C166.7 384.7 168.5 383.5 169.0 383.0 C169.7 382.0 171.7 378.3 173.0 377.0 C174.3 375.7 176.0 375.7 176.6 375.4 C177.0 375.0 178.2 373.4 179.0 373.0 C179.8 372.6 181.2 372.9 181.7 372.9 C182.4 372.2 184.5 369.9 186.0 369.0 C187.5 368.1 189.8 368.0 190.5 367.8 C190.9 367.2 192.2 365.0 193.0 364.0 C193.8 363.0 194.5 362.6 195.5 362.0 C196.5 361.4 197.9 360.6 199.0 360.5 C200.1 360.4 201.2 360.7 201.9 361.5 C202.6 362.3 202.8 364.7 203.0 365.3 M216.4 374 C216.8 373.2 218.1 370.0 219.0 369.0 C219.9 368.0 220.4 368.2 222.0 367.8 C223.6 367.4 227.1 365.9 228.8 366.6 C230.5 367.3 231.5 371.3 232.0 372.2 C232.7 372.3 234.8 372.5 236.0 373.0 C237.2 373.5 238.5 375.0 239.0 375.4 C239.3 375.8 240.5 377.6 240.8 378.0 C241.7 378.3 244.6 379.2 246.0 380.0 C247.4 380.8 248.3 381.7 249.0 383.0 C249.7 384.3 250.1 387.2 250.3 388.0 C250.1 388.6 249.2 391.2 249.0 391.8 C249.2 392.3 250.5 394.0 250.5 395.0 C250.5 396.0 249.2 397.5 249.0 398.0 M176.6 430.8 C176.8 429.8 177.8 426.8 177.8 424.8 C177.8 422.8 176.7 421.6 176.6 418.8 C176.5 416.0 177.1 409.8 177.2 408.0 C177.8 407.9 180.0 408.5 181.0 407.5 C182.0 406.5 182.7 402.9 183.0 402.0 C183.3 402.4 184.2 404.0 185.0 404.5 C185.8 405.0 187.1 405.1 188.0 405.0 C188.9 404.9 189.7 404.5 190.5 404.0 C191.3 403.5 192.3 402.3 192.7 402.0 C193.1 402.4 193.9 404.0 195.0 404.5 C196.1 405.0 197.7 405.2 199.3 405.0 C200.9 404.8 203.7 403.6 204.6 403.3 C205.1 402.3 207.0 398.5 207.5 397.5 C208.0 398.2 208.7 400.9 210.7 402.0 C212.7 403.1 218.0 403.5 219.5 403.8 C219.7 405.3 220.0 410.6 220.8 413.0 C221.7 415.4 224.0 417.2 224.6 418.0 C224.2 418.7 222.7 419.9 222.0 422.0 C221.3 424.1 220.3 428.2 220.3 430.7 C220.3 433.2 221.0 435.4 222.0 437.0 C223.0 438.6 224.7 440.0 226.2 440.5 C227.7 441.0 229.7 440.3 231.0 440.0 C232.3 439.7 233.2 440.2 234.0 438.6 C234.8 437.1 235.7 432.0 236.0 430.7 C236.7 430.7 238.7 430.2 240.0 430.5 C241.3 430.8 243.2 432.3 243.9 432.7 C244.2 431.9 245.0 429.0 246.0 428.0 C247.0 427.0 249.1 427.0 249.7 426.8 C250.2 426.3 252.0 424.6 253.0 424.0 C254.0 423.4 255.2 423.1 255.6 422.9 M264 383 C265.0 382.9 267.3 382.7 269.9 382.3 C272.4 381.9 275.8 380.4 279.3 380.5 C282.8 380.6 287.1 379.6 290.7 383.0 C294.3 386.4 298.6 393.6 300.8 400.6 C303.0 407.6 303.7 418.4 304.0 425.0 C304.3 431.6 304.0 435.8 302.8 440.0 C301.6 444.2 299.6 446.7 297.0 450.0 C294.4 453.3 292.9 456.7 287.0 460.0 C281.1 463.3 265.8 468.3 261.5 470.0 M255.4 408.2 C258.8 406.2 270.4 397.9 275.5 396.2 C280.6 394.5 282.9 395.6 285.7 398.0 C288.4 400.4 290.9 406.2 292.0 410.7 C293.1 415.2 292.8 421.4 292.6 425.0 C292.4 428.6 291.9 429.4 291.0 432.0 C290.1 434.6 289.6 437.4 287.0 440.5 C284.4 443.6 279.9 447.7 275.3 450.3 C270.7 452.9 262.2 455.2 259.6 456.2 M193.3 403.3 C193.4 409.4 193.6 426.9 193.6 440.0 C193.6 453.1 193.5 475.0 193.5 482.0 M204.6 403.3 C204.7 409.4 204.8 426.6 205.0 440.0 C205.2 453.4 205.5 476.7 205.6 484.0 M222.3 440 C222.4 443.3 222.7 453.0 222.8 460.0 C223.0 467.0 223.1 478.3 223.2 482.0 M234 438.6 C234.0 442.2 234.2 453.1 234.2 460.0 C234.2 466.9 234.0 476.7 234.0 480.0 M249.7 426.8 C250.1 430.7 251.3 442.5 252.0 450.0 C252.7 457.5 253.4 468.3 253.7 472.0 M176.6 430.8 C176.5 434.8 176.2 446.8 176.0 455.0 C175.8 463.2 175.5 475.8 175.4 480.0 M255.4 395 C255.8 400.8 256.9 417.5 257.6 430.0 C258.3 442.5 259.3 463.3 259.6 470.0 " fill="none" stroke="#000" stroke-width="1.5" stroke-linejoin="round" stroke-linecap="round"/></g><path d="M161.4 468 C165.6 468.0 167.2 473.2 175.0 476.0 C182.8 478.8 197.2 484.0 208.0 484.5 C218.8 485.0 231.0 481.4 240.0 479.0 C249.0 476.6 256.2 471.2 262.0 470.0 C267.8 468.8 271.0 469.8 275.0 471.5 C279.0 473.2 283.3 476.1 286.0 480.0 C288.7 483.9 290.3 490.0 291.0 495.0 C291.7 500.0 291.8 505.0 290.0 510.0 C288.2 515.0 285.0 520.5 280.0 525.0 C275.0 529.5 268.3 533.8 260.0 537.0 C251.7 540.2 239.2 542.6 230.0 544.0 C220.8 545.4 214.2 546.0 205.0 545.5 C195.8 545.0 184.2 543.6 175.0 541.0 C165.8 538.4 156.0 533.8 150.0 530.0 C144.0 526.2 141.3 522.7 139.0 518.0 C136.7 513.3 135.7 507.2 136.0 502.0 C136.3 496.8 138.7 491.3 141.0 487.0 C143.3 482.7 146.6 479.2 150.0 476.0 C153.4 472.8 157.2 468.0 161.4 468.0Z" fill="#b32800"/><g transform="translate(216,6)"><path d="M176.6 430.8 C176.1 433.6 174.2 442.9 173.6 447.4 C173.0 451.9 173.7 455.0 173.0 458.0 C172.3 461.0 170.6 464.1 169.4 465.3 C168.2 466.5 166.8 466.1 165.9 465.3 C165.0 464.5 163.8 462.4 164.0 460.6 C164.2 458.8 166.3 457.6 167.0 454.6 C167.7 451.6 167.9 446.8 168.2 442.7 C168.5 438.6 169.3 432.4 168.8 430.2 C168.3 428.0 166.7 430.9 165.3 429.6 C163.9 428.3 161.7 425.6 160.5 422.4 C159.3 419.2 158.8 414.6 158.0 410.5 C157.2 406.4 156.3 399.8 156.0 397.6 A25 25 0 0 1 155 377.4 A11.4 11.4 0 0 1 161.1 359.7 A8.8 8.8 0 0 1 173.2 354.2 A11.8 11.8 0 0 1 194.4 354.2 A14.3 14.3 0 0 1 214.6 344 A13 13 0 0 1 234.3 353.7 A9 9 0 0 1 250 355.7 A9 9 0 0 1 259.6 368.3 A8.5 8.5 0 0 1 262.1 385 A8.3 8.3 0 0 1 255 395.6 M164.6 391 C164.8 390.2 165.3 387.3 166.0 386.0 C166.7 384.7 168.5 383.5 169.0 383.0 C169.7 382.0 171.7 378.3 173.0 377.0 C174.3 375.7 176.0 375.7 176.6 375.4 C177.0 375.0 178.2 373.4 179.0 373.0 C179.8 372.6 181.2 372.9 181.7 372.9 C182.4 372.2 184.5 369.9 186.0 369.0 C187.5 368.1 189.8 368.0 190.5 367.8 C190.9 367.2 192.2 365.0 193.0 364.0 C193.8 363.0 194.5 362.6 195.5 362.0 C196.5 361.4 197.9 360.6 199.0 360.5 C200.1 360.4 201.2 360.7 201.9 361.5 C202.6 362.3 202.8 364.7 203.0 365.3 M216.4 374 C216.8 373.2 218.1 370.0 219.0 369.0 C219.9 368.0 220.4 368.2 222.0 367.8 C223.6 367.4 227.1 365.9 228.8 366.6 C230.5 367.3 231.5 371.3 232.0 372.2 C232.7 372.3 234.8 372.5 236.0 373.0 C237.2 373.5 238.5 375.0 239.0 375.4 C239.3 375.8 240.5 377.6 240.8 378.0 C241.7 378.3 244.6 379.2 246.0 380.0 C247.4 380.8 248.3 381.7 249.0 383.0 C249.7 384.3 250.1 387.2 250.3 388.0 C250.1 388.6 249.2 391.2 249.0 391.8 C249.2 392.3 250.5 394.0 250.5 395.0 C250.5 396.0 249.2 397.5 249.0 398.0 M176.6 430.8 C176.8 429.8 177.8 426.8 177.8 424.8 C177.8 422.8 176.7 421.6 176.6 418.8 C176.5 416.0 177.1 409.8 177.2 408.0 C177.8 407.9 180.0 408.5 181.0 407.5 C182.0 406.5 182.7 402.9 183.0 402.0 C183.3 402.4 184.2 404.0 185.0 404.5 C185.8 405.0 187.1 405.1 188.0 405.0 C188.9 404.9 189.7 404.5 190.5 404.0 C191.3 403.5 192.3 402.3 192.7 402.0 C193.1 402.4 193.9 404.0 195.0 404.5 C196.1 405.0 197.7 405.2 199.3 405.0 C200.9 404.8 203.7 403.6 204.6 403.3 C205.1 402.3 207.0 398.5 207.5 397.5 C208.0 398.2 208.7 400.9 210.7 402.0 C212.7 403.1 218.0 403.5 219.5 403.8 C219.7 405.3 220.0 410.6 220.8 413.0 C221.7 415.4 224.0 417.2 224.6 418.0 C224.2 418.7 222.7 419.9 222.0 422.0 C221.3 424.1 220.3 428.2 220.3 430.7 C220.3 433.2 221.0 435.4 222.0 437.0 C223.0 438.6 224.7 440.0 226.2 440.5 C227.7 441.0 229.7 440.3 231.0 440.0 C232.3 439.7 233.2 440.2 234.0 438.6 C234.8 437.1 235.7 432.0 236.0 430.7 C236.7 430.7 238.7 430.2 240.0 430.5 C241.3 430.8 243.2 432.3 243.9 432.7 C244.2 431.9 245.0 429.0 246.0 428.0 C247.0 427.0 249.1 427.0 249.7 426.8 C250.2 426.3 252.0 424.6 253.0 424.0 C254.0 423.4 255.2 423.1 255.6 422.9 M264 383 C265.0 382.9 267.3 382.7 269.9 382.3 C272.4 381.9 275.8 380.4 279.3 380.5 C282.8 380.6 287.1 379.6 290.7 383.0 C294.3 386.4 298.6 393.6 300.8 400.6 C303.0 407.6 303.7 418.4 304.0 425.0 C304.3 431.6 304.0 435.8 302.8 440.0 C301.6 444.2 299.6 446.7 297.0 450.0 C294.4 453.3 292.9 456.7 287.0 460.0 C281.1 463.3 265.8 468.3 261.5 470.0 M255.4 408.2 C258.8 406.2 270.4 397.9 275.5 396.2 C280.6 394.5 282.9 395.6 285.7 398.0 C288.4 400.4 290.9 406.2 292.0 410.7 C293.1 415.2 292.8 421.4 292.6 425.0 C292.4 428.6 291.9 429.4 291.0 432.0 C290.1 434.6 289.6 437.4 287.0 440.5 C284.4 443.6 279.9 447.7 275.3 450.3 C270.7 452.9 262.2 455.2 259.6 456.2 M193.3 403.3 C193.4 409.4 193.6 426.9 193.6 440.0 C193.6 453.1 193.5 475.0 193.5 482.0 M204.6 403.3 C204.7 409.4 204.8 426.6 205.0 440.0 C205.2 453.4 205.5 476.7 205.6 484.0 M222.3 440 C222.4 443.3 222.7 453.0 222.8 460.0 C223.0 467.0 223.1 478.3 223.2 482.0 M234 438.6 C234.0 442.2 234.2 453.1 234.2 460.0 C234.2 466.9 234.0 476.7 234.0 480.0 M249.7 426.8 C250.1 430.7 251.3 442.5 252.0 450.0 C252.7 457.5 253.4 468.3 253.7 472.0 M176.6 430.8 C176.5 434.8 176.2 446.8 176.0 455.0 C175.8 463.2 175.5 475.8 175.4 480.0 M255.4 395 C255.8 400.8 256.9 417.5 257.6 430.0 C258.3 442.5 259.3 463.3 259.6 470.0 M167 465 C166.5 469.8 164.5 489.2 164.0 494.0 M175.4 478 C175.5 479.3 175.1 484.0 176.0 486.0 C176.9 488.0 179.0 489.3 181.0 490.0 C183.0 490.7 186.1 490.5 188.0 490.0 C189.9 489.5 191.6 489.0 192.5 487.0 C193.4 485.0 193.3 479.5 193.5 478.0 M205.6 482 C205.7 483.2 204.8 487.5 206.0 489.0 C207.2 490.5 210.7 491.0 213.0 491.0 C215.3 491.0 218.4 490.8 220.0 489.0 C221.6 487.2 222.3 481.5 222.8 480.0 M234 478 C234.2 479.3 233.7 484.4 235.0 486.0 C236.3 487.6 239.4 487.6 241.6 487.4 C243.8 487.2 246.3 486.1 248.0 485.0 C249.7 483.9 251.1 483.5 252.0 481.0 C252.9 478.5 253.4 471.8 253.7 470.0 M259.6 468 C260.2 471.8 262.9 487.2 263.5 491.0 M162.5 494 C161.5 495.7 157.2 500.8 156.6 504.2 C156.0 507.6 155.7 511.2 159.2 514.3 C162.7 517.4 169.0 520.8 177.7 522.7 C186.4 524.7 200.1 526.5 211.3 526.0 C222.5 525.5 236.0 522.2 245.0 519.4 C254.0 516.6 261.1 512.7 265.2 509.3 C269.3 505.9 269.4 502.1 269.4 499.2 C269.4 496.2 265.9 492.9 265.2 491.6 M164.2 495.8 C167.8 497.3 178.2 503.2 186.0 505.0 C193.8 506.8 202.6 507.1 211.3 506.7 C220.0 506.3 229.6 504.9 238.3 502.5 C247.0 500.1 259.3 494.1 263.5 492.4 " fill="none" stroke="#000" stroke-width="1.5" stroke-linejoin="round" stroke-linecap="round"/></g><path d="M376.9 362.9 L410.3 358.1 L438.9 356.3 L448.5 358.1 L453.8 364.1 L453.2 368.8 L466.3 373.6 L475.9 379.6 L479.5 386.7 L505.7 386.7 L507.5 393.9 L496.2 403.4 L479.5 411.8 L459.2 415.3 L456.8 418.9 L452 422.5 L441.3 418.9 L431.8 409.4 L422.2 403.4 L409.1 401 L393.6 401 L387.7 407 L384.1 421.3 L375.7 424.9 L372.2 418.9 L371 392.7 L373.3 374.8Z" fill="#ff0000" stroke="#ff0000" stroke-width="2" stroke-linejoin="round"/><path d="M449.7 401L464 402.2 462.8 404.6z M477 401L487.8 397.5 479.5 403.4z" fill="#fff"/><text x="172" y="293.8" font-family="Liberation Sans" font-size="28.5" textLength="31.5" lengthAdjust="spacing">fill</text><text x="391" y="327.3" font-family="Liberation Sans" font-size="31" textLength="88" lengthAdjust="spacingAndGlyphs">eraser</text></g></svg>
<div class="a" style="left:1015px;top:81px;width:2px;height:577px;background:#111"></div>
<div class="a" style="left:1015px;top:82px;width:320px;height:2px;background:#111"></div>
<div class="a" style="left:1017px;top:84px;width:318px;height:574px;background:#f0f0f0"></div>
<svg class="a" style="left:1016px;top:86px" width="14" height="15" viewBox="0 0 14 15"><path d="M1 1.5H12" stroke="#111" stroke-width="2"/><path d="M1 1v12" stroke="#333" stroke-width="1.5"/><rect x="2" y="2.5" width="9" height="9" fill="#fafafa"/><path d="M0.5 14 C1 11 4 7 10.5 2.5 L13.5 4.5 C9 10 6 13 0.5 14z" fill="#151515"/><path d="M11 2l2.5 1-1 2.5z" fill="#5a9a3a"/></svg>
<div class="a" style="left:1030px;top:87px;font-size:12px;white-space:nowrap;letter-spacing:-0.25px">Fill and Stroke (Shift+Ctrl+F)</div>
<div class="a" style="left:1269px;top:88px;width:12px;height:12px;border:1px solid #8a8a8a;border-radius:2px;background:#f4f4f4"></div>
<svg class="a" style="left:1272px;top:91px" width="6" height="6" viewBox="0 0 6 6"><path d="M5 0v6L0 3z" fill="#666"/></svg>
<div class="a" style="left:1290px;top:88px;width:12px;height:12px;border:1px solid #8a8a8a;border-radius:2px;background:#f4f4f4"></div>
<svg class="a" style="left:1292px;top:90px" width="8" height="8" viewBox="0 0 8 8"><path d="M1 1l6 6M7 1l-6 6" stroke="#555" stroke-width="2"/></svg>
<div class="a" style="left:1017px;top:105px;width:290px;height:1px;background:#a0a0a0"></div>
<div class="a" style="left:1017px;top:106px;width:290px;height:1px;background:#fff"></div>
<div class="a" style="left:1021px;top:134px;width:282px;height:198px;background:#fff;border:1px solid #8e8f8f"></div>
<div class="a" style="left:1062px;top:112px;width:85px;height:23px;border:1px solid #8e8f8f;border-bottom:none;background:linear-gradient(#f4f4f4,#e4e4e4)"></div>
<div class="a" style="left:1147px;top:112px;width:83px;height:23px;border:1px solid #8e8f8f;border-bottom:none;background:linear-gradient(#f4f4f4,#e4e4e4)"></div>
<div class="a" style="left:1021px;top:110px;width:42px;height:25px;border:1px solid #8e8f8f;border-bottom:none;background:#fff"></div>
<svg class="a" style="left:1026px;top:119px" width="8" height="8" viewBox="0 0 8 8"><rect width="8" height="8" fill="#c8d4e4"/></svg>
<div class="a" style="left:1040px;top:118px;font-size:12px"><u>F</u>ill</div>
<svg class="a" style="left:1066px;top:119px" width="9" height="9" viewBox="0 0 9 9"><rect x=".5" y=".5" width="8" height="8" fill="#eee" stroke="#999"/></svg>
<div class="a" style="left:1078px;top:118px;font-size:12px;white-space:nowrap;letter-spacing:-0.2px">Stroke paint</div>
<svg class="a" style="left:1150px;top:119px" width="10" height="8" viewBox="0 0 10 8"><path d="M0 1.5h8M0 4.5h9M0 7.5h8" stroke="#666" stroke-dasharray="2 1"/></svg>
<div class="a" style="left:1164px;top:118px;font-size:12px;white-space:nowrap;letter-spacing:-0.2px">Stroke style</div>
<svg class="a" style="left:1039px;top:152px" width="11" height="12" viewBox="0 0 11 12"><path d="M1 1l9 10M10 1L1 11" stroke="#222" stroke-width="2.2"/></svg>
<svg class="a" style="left:1064px;top:148px" width="20" height="20" viewBox="0 0 20 20"><rect x="1" y="1" width="18" height="18" fill="#a4adba"/><rect x=".5" y=".5" width="19" height="19" fill="none" stroke="#222" stroke-dasharray="1 1"/></svg>
<svg class="a" style="left:1094px;top:148px" width="20" height="20" viewBox="0 0 20 20"><defs><linearGradient id="fl1" x1="0" y1="0" x2="1" y2="1"><stop offset="0" stop-color="#a8b0bc"/><stop offset="1" stop-color="#e0e4ea"/></linearGradient></defs><rect x="1" y="1" width="18" height="18" fill="url(#fl1)"/><rect x=".5" y=".5" width="19" height="19" fill="none" stroke="#222" stroke-dasharray="1 1"/></svg>
<svg class="a" style="left:1124px;top:148px" width="20" height="20" viewBox="0 0 20 20"><defs><radialGradient id="fl2" cx=".6" cy=".6" r=".7"><stop offset="0" stop-color="#e4e8ec"/><stop offset="1" stop-color="#9ea8b6"/></radialGradient></defs><rect x="1" y="1" width="18" height="18" fill="url(#fl2)"/><rect x=".5" y=".5" width="19" height="19" fill="none" stroke="#222" stroke-dasharray="1 1"/></svg>
<svg class="a" style="left:1154px;top:148px" width="20" height="20" viewBox="0 0 20 20"><rect x="1" y="1" width="18" height="18" fill="#d4d8de"/><circle cx="6" cy="6" r="2.5" fill="#b8bec8"/><circle cx="14" cy="6" r="2.5" fill="#b8bec8"/><circle cx="6" cy="14" r="2.5" fill="#b8bec8"/><circle cx="14" cy="14" r="2.5" fill="#b8bec8"/><rect x=".5" y=".5" width="19" height="19" fill="none" stroke="#222" stroke-dasharray="1 1"/></svg>
<svg class="a" style="left:1184px;top:148px" width="20" height="20" viewBox="0 0 20 20"><rect x="1" y="1" width="18" height="18" fill="#a8b0bc"/><rect x="4" y="3" width="13" height="13" fill="#e8eaee"/><rect x=".5" y=".5" width="19" height="19" fill="none" stroke="#222" stroke-dasharray="1 1"/></svg>
<div class="a" style="left:1216px;top:145px;font-weight:bold;font-size:21px;line-height:22px;color:#222">?</div>
<svg class="a" style="left:1261px;top:152px" width="10" height="9" viewBox="0 0 10 9"><path d="M1.5 1v3.5a3.5 3.5 0 0 0 7 0V1" fill="none" stroke="#333" stroke-width="2.4"/></svg>
<svg class="a" style="left:1280px;top:152px" width="11" height="9" viewBox="0 0 11 9"><path d="M0 1h4l1.5 1.5 1.5-1.5h4v3a5.5 5 0 0 1-11 0z" fill="#333"/></svg>
<div class="a" style="left:1029px;top:182px;font-weight:bold;font-size:12px;letter-spacing:-0.2px">No objects</div>
<div class="a" style="left:1021px;top:336px;width:270px;height:24px;border:1px solid #c8c8c8;background:#ececec;box-shadow:inset 0 0 0 1px #fafafa"></div>
<div class="a" style="left:1027px;top:340px;font-size:12px;color:#808080">Blur (%)</div>
<div class="a" style="left:1250px;top:340px;width:37px;text-align:right;font-size:12px;color:#808080">0.0</div>
<div class="spin spinl" style="left:1292px;top:337px;height:22px;border-color:#d0d0d0;background:#f0f0f0"></div>
<div class="a" style="left:1021px;top:364px;width:270px;height:24px;border:1px solid #c8c8c8;background:#f4f4f4"></div>
<div class="a" style="left:1023px;top:366px;width:266px;height:20px;background:#b5c0ca;border-right:2px solid #111;border-bottom:2px solid #111"></div>
<div class="a" style="left:1027px;top:368px;font-size:12px;color:#111">Opacity (%)</div>
<div class="a" style="left:1240px;top:368px;width:47px;text-align:right;font-size:12px;color:#111">100.0</div>
<div class="spin spinl" style="left:1292px;top:365px;height:22px;border-color:#d0d0d0;background:#f0f0f0"></div>
<div class="a" style="left:1017px;top:393px;width:290px;height:1px;background:#e4e4e4"></div>
<div class="a" style="left:1303px;top:106px;width:1px;height:287px;background:#e0e0e0"></div>
<div class="a" style="left:1314px;top:231px;transform-origin:0 0;transform:rotate(-90deg);font-size:12px;white-space:nowrap;letter-spacing:-0.2px;line-height:14px">Text and Font (Shift+Ctrl+T)</div>
<div class="a" style="left:1310px;top:230px;font-family:'Liberation Serif',serif;font-weight:bold;font-size:20px;line-height:20px">T</div>
<div class="a" style="left:1314px;top:424px;transform-origin:0 0;transform:rotate(-90deg);font-size:12px;white-space:nowrap;letter-spacing:-0.2px;line-height:14px">Object Properties (Shift+Ctrl+O)</div>
<svg class="a" style="left:1314px;top:430px" width="13" height="14" viewBox="0 0 13 14"><rect x=".5" y="4.5" width="8" height="8" fill="#f0d040" stroke="#886"/><path d="M6 1l6 6-5 6" fill="#ccc" stroke="#666"/></svg>
<div class="a" style="left:1335px;top:81px;width:29px;height:577px;background:linear-gradient(90deg,#e2e6f3,#d4daee 30%,#d6dcef)"></div>
<div class="pressed" style="left:1338px;top:85px;width:26px;height:22px"></div>
<svg class="a" style="left:1342px;top:88px" width="18" height="18" viewBox="0 0 18 18"><rect x="1.5" y="1.5" width="4" height="4" transform="rotate(45 3.5 3.5)" fill="#c0c0ff" stroke="#3030e0" stroke-width="1.4"/><path d="M5 5l8 8" stroke="#000" stroke-width="1.5"/><path d="M13 13l-4 0 4-4z" fill="#000"/><rect x="12.5" y="12.5" width="4" height="4" transform="rotate(45 14.5 14.5)" fill="#a8d8b8" stroke="#3a8a5a" stroke-width="1.4"/></svg>
<div class="a" style="left:1340px;top:115px;width:20px;height:1px;background:#fafbfd"></div>
<svg class="a" style="left:1342px;top:125px" width="18" height="18" viewBox="0 0 18 18"><rect x="1.5" y="1.5" width="4" height="4" transform="rotate(45 3.5 3.5)" fill="#c0c0ff" stroke="#3030e0" stroke-width="1.4"/><path d="M5 5l8 8" stroke="#000" stroke-width="1.5"/><path d="M13 13l-4 0 4-4z" fill="#000"/><rect x="12.5" y="12.5" width="4" height="4" transform="rotate(45 14.5 14.5)" fill="#a8d8b8" stroke="#3a8a5a" stroke-width="1.4"/></svg>
<svg class="a" style="left:1342px;top:151px" width="18" height="17" viewBox="0 0 18 17"><path d="M1 15h16M16 1v15" stroke="#777" stroke-dasharray="1.5 1.5"/><path d="M1 12h12" stroke="#aaa" stroke-dasharray="1.5 1.5"/></svg>
<svg class="a" style="left:1342px;top:177px" width="18" height="18" viewBox="0 0 18 18"><path d="M1 9h16M12 1v16" stroke="#555" stroke-dasharray="1.5 1.5"/><rect x="9.5" y="6.5" width="5" height="5" transform="rotate(45 12 9)" fill="#ddd" stroke="#555"/></svg>
<svg class="a" style="left:1342px;top:203px" width="18" height="16" viewBox="0 0 18 16"><path d="M3 14h10M13 1v13" stroke="#333" stroke-dasharray="1.5 1.5"/><rect x="10.5" y="4.5" width="4" height="4" transform="rotate(45 12.5 6.5)" fill="#ddd" stroke="#555"/></svg>
<svg class="a" style="left:1342px;top:228px" width="18" height="15" viewBox="0 0 18 15"><path d="M3 13h12M15 3v10" stroke="#333" stroke-dasharray="1.5 1.5"/><circle cx="6" cy="6" r="2" fill="#ddd" stroke="#555"/></svg>
<div class="a" style="left:1340px;top:257px;width:20px;height:1px;background:#fafbfd"></div>
<div class="pressed" style="left:1338px;top:265px;width:26px;height:23px"></div>
<svg class="a" style="left:1342px;top:268px" width="18" height="18" viewBox="0 0 18 18"><rect x="1.5" y="1.5" width="4" height="4" transform="rotate(45 3.5 3.5)" fill="#c0c0ff" stroke="#3030e0" stroke-width="1.4"/><path d="M5 5l8 8" stroke="#000" stroke-width="1.5"/><path d="M13 13l-4 0 4-4z" fill="#000"/><rect x="12.5" y="12.5" width="4" height="4" transform="rotate(45 14.5 14.5)" fill="#a8d8b8" stroke="#3a8a5a" stroke-width="1.4"/></svg>
<svg class="a" style="left:1342px;top:294px" width="18" height="16" viewBox="0 0 18 16"><path d="M2 2c6 0 12 6 10 12 M12 14l-4-1" fill="none" stroke="#3a9a3a" stroke-width="1.3"/><circle cx="11" cy="10" r="1.5" fill="#3a9a3a"/></svg>
<svg class="a" style="left:1342px;top:320px" width="18" height="15" viewBox="0 0 18 15"><path d="M1 14L17 1M3 5l10 5" stroke="#3a8a3a" stroke-width="1.2"/><circle cx="9" cy="8" r="2" fill="#3a9a3a"/></svg>
<svg class="a" style="left:1342px;top:346px" width="18" height="18" viewBox="0 0 18 18"><path d="M2 2c8 2 12 6 10 12" fill="none" stroke="#555" stroke-width="1.2"/><circle cx="10" cy="13" r="2" fill="#3a9a3a"/></svg>
<svg class="a" style="left:1342px;top:371px" width="18" height="16" viewBox="0 0 18 16"><path d="M2 2c8 0 12 6 8 12" fill="none" stroke="#555" stroke-width="1.2"/><circle cx="6" cy="4" r="2" fill="#3a9a3a"/></svg>
<svg class="a" style="left:1342px;top:397px" width="18" height="17" viewBox="0 0 18 17"><path d="M1 16L17 2" stroke="#d03030" stroke-width="1" stroke-dasharray="2 1"/><path d="M4 10l2 4M8 7l2 4M12 4l2 4" stroke="#c03030"/><circle cx="9" cy="9" r="2" fill="#3a9a3a"/></svg>
<div class="a" style="left:1340px;top:425px;width:20px;height:1px;background:#fafbfd"></div>
<div class="pressed" style="left:1338px;top:433px;width:26px;height:23px"></div>
<svg class="a" style="left:1342px;top:436px" width="18" height="18" viewBox="0 0 18 18"><rect x="1.5" y="1.5" width="4" height="4" transform="rotate(45 3.5 3.5)" fill="#c0c0ff" stroke="#3030e0" stroke-width="1.4"/><path d="M5 5l8 8" stroke="#000" stroke-width="1.5"/><path d="M13 13l-4 0 4-4z" fill="#000"/><rect x="12.5" y="12.5" width="4" height="4" transform="rotate(45 14.5 14.5)" fill="#a8d8b8" stroke="#3a8a5a" stroke-width="1.4"/></svg>
<svg class="a" style="left:1342px;top:461px" width="18" height="15" viewBox="0 0 18 15"><path d="M3 14h12M15 2v12" stroke="#555" stroke-width="1"/><circle cx="6" cy="6" r="2" fill="#fff" stroke="#3a9a3a"/></svg>
<svg class="a" style="left:1342px;top:488px" width="18" height="16" viewBox="0 0 18 16"><path d="M1 7h8M5 3v8" stroke="#222" stroke-width="1.5"/><path d="M3 15h12M15 1v14" stroke="#333" stroke-dasharray="1.5 1.5"/></svg>
<svg class="a" style="left:1343px;top:514px" width="15" height="17" viewBox="0 0 15 17"><path d="M.5 .5h9l5 5v11H.5z" fill="#fafaf6" stroke="#999"/><path d="M4 7l6 6M10 7l-6 6" stroke="#e03030" stroke-width="1.2"/></svg>
<div class="a" style="left:1340px;top:540px;width:20px;height:1px;background:#fafbfd"></div>
<svg class="a" style="left:1344px;top:551px" width="14" height="17" viewBox="0 0 14 17"><defs><linearGradient id="gpg" x1="0" y1="0" x2="1" y2="1"><stop offset="0" stop-color="#fff"/><stop offset="1" stop-color="#888"/></linearGradient></defs><rect x=".5" y=".5" width="13" height="16" fill="url(#gpg)" stroke="#111"/></svg>
<div class="pressed" style="left:1338px;top:575px;width:26px;height:23px"></div>
<svg class="a" style="left:1342px;top:578px" width="18" height="17" viewBox="0 0 18 17"><path d="M1 3h16M1 7h16M1 11h16M1 15h16M3 1v16M7 1v16M11 1v16M15 1v16" stroke="#2020c0" stroke-width="1.2"/></svg>
<div class="pressed" style="left:1338px;top:601px;width:26px;height:23px"></div>
<svg class="a" style="left:1343px;top:604px" width="16" height="17" viewBox="0 0 16 17"><path d="M3 1v15M13 1v15M11 1L5 16" stroke="#1a1ab8" stroke-width="1.3"/></svg>
<div class="a" style="left:0;top:659px;width:1364px;height:1px;background:#111"></div>
<div class="a" style="left:0;top:660px;width:1364px;height:15px;background:#f0f0f0"></div>
<div class="a" style="left:44px;top:660px;width:42px;height:14px;background:#a0620a"></div>
<div class="a" style="left:86px;top:660px;width:42px;height:14px;background:#d4a00e"></div>
<div class="a" style="left:128px;top:660px;width:42px;height:14px;background:#ffcc00"></div>
<div class="a" style="left:170px;top:660px;width:42px;height:14px;background:#ffff00"></div>
<div class="a" style="left:212px;top:660px;width:42px;height:14px;background:#ffff99"></div>
<div class="a" style="left:254px;top:660px;width:42px;height:14px;background:#ffdd99"></div>
<div class="a" style="left:296px;top:660px;width:42px;height:14px;background:#ffcc66"></div>
<div class="a" style="left:338px;top:660px;width:42px;height:14px;background:#ff9933"></div>
<div class="a" style="left:380px;top:660px;width:42px;height:14px;background:#ff7744"></div>
<div class="a" style="left:422px;top:660px;width:42px;height:14px;background:#ff3300"></div>
<div class="a" style="left:464px;top:660px;width:42px;height:14px;background:#990000"></div>
<div class="a" style="left:506px;top:660px;width:42px;height:14px;background:#333366"></div>
<div class="a" style="left:548px;top:660px;width:42px;height:14px;background:#003399"></div>
<div class="a" style="left:590px;top:660px;width:42px;height:14px;background:#0066cc"></div>
<div class="a" style="left:632px;top:660px;width:42px;height:14px;background:#0088dd"></div>
<div class="a" style="left:674px;top:660px;width:42px;height:14px;background:#0099ff"></div>
<div class="a" style="left:716px;top:660px;width:42px;height:14px;background:#3399dd"></div>
<div class="a" style="left:758px;top:660px;width:42px;height:14px;background:#99ccff"></div>
<div class="a" style="left:800px;top:660px;width:42px;height:14px;background:#b3e0ff"></div>
<div class="a" style="left:842px;top:660px;width:42px;height:14px;background:#ddffff"></div>
<div class="a" style="left:884px;top:660px;width:42px;height:14px;background:#ffccff"></div>
<div class="a" style="left:926px;top:660px;width:42px;height:14px;background:#ccccff"></div>
<div class="a" style="left:968px;top:660px;width:43px;height:14px;background:#9999ff"></div>
<div class="a" style="left:1011px;top:660px;width:43px;height:14px;background:#6666cc"></div>
<div class="a" style="left:1054px;top:660px;width:43px;height:14px;background:#9999cc"></div>
<div class="a" style="left:1097px;top:660px;width:43px;height:14px;background:#666699"></div>
<div class="a" style="left:1140px;top:660px;width:43px;height:14px;background:#006600"></div>
<div class="a" style="left:1183px;top:660px;width:43px;height:14px;background:#009900"></div>
<div class="a" style="left:1226px;top:660px;width:43px;height:14px;background:#66cc33"></div>
<div class="a" style="left:1269px;top:660px;width:43px;height:14px;background:#99ff66"></div>
<div class="a" style="left:1312px;top:660px;width:43px;height:14px;background:#cceecc"></div>
<div class="a" style="left:1px;top:660px;width:43px;height:14px;background:#fff;border-left:1px solid #111"></div>
<svg class="a" style="left:1px;top:660px" width="43" height="14" viewBox="0 0 43 14"><path d="M1 1L42 13M1 13L42 1" stroke="#8a1010" stroke-width="1.5"/></svg>
<svg class="a" style="left:1356px;top:661px" width="6" height="9" viewBox="0 0 6 9"><path d="M6 0v9L0 4.5z" fill="#111"/></svg>
<div class="a" style="left:0;top:675px;width:1364px;height:29px;background:#f0f0f0"></div>
<div class="a" style="left:2px;top:677px;font-size:11px;line-height:14px">Fill:<br>Stroke:</div>
<div class="a" style="left:73px;top:677px;font-size:11px;line-height:14px">N/A<br>N/A</div>
<div class="a" style="left:126px;top:683px;font-size:12px">O:</div>
<div class="entry" style="left:140px;top:679px;width:37px;height:21px;line-height:20px;color:#888;background:#f0f0f0;border-color:#c0c0c0;font-size:12px;padding-left:3px">100</div>
<div class="spin spinl" style="left:177px;top:680px;height:19px;border-color:#c8c8c8;background:#f0f0f0"></div>
<div class="a" style="left:190px;top:677px;width:1px;height:26px;background:#c8c8c8"></div>
<svg class="a" style="left:195px;top:684px" width="11" height="9" viewBox="0 0 11 9"><path d="M1 4c2-3 7-3 9 0-2 3-7 3-9 0z" fill="#333"/><path d="M2 1l1 2M5 0v2M8 1l-1 2" stroke="#333"/><circle cx="5.5" cy="4" r="1.3" fill="#fff"/></svg>
<svg class="a" style="left:211px;top:683px" width="9" height="11" viewBox="0 0 9 11"><rect x=".5" y="5.5" width="8" height="5" fill="#f8f0c0" stroke="#665"/><path d="M2 5V3a2.5 2.5 0 0 1 5 0" fill="none" stroke="#665"/></svg>
<div class="a" style="left:223px;top:677px;width:52px;height:26px;background:#fff;border:1px solid #b0b0b0;border-right:none"></div>
<div class="a" style="left:228px;top:684px;font-size:10.5px;font-weight:bold;white-space:nowrap"><span style="font-size:8px;vertical-align:1px">&#9642;</span> Layer 1</div>
<div class="ddb" style="left:274px;top:677px;width:17px;height:26px"></div>
<div class="a" style="left:1199px;top:677px;width:1px;height:26px;background:#c8c8c8"></div>
<div class="a" style="left:1203px;top:677px;font-size:11px;line-height:14px">X:<br>Y:</div>
<div class="a mono" style="left:1213px;top:677px;font-size:11.5px;line-height:14px;white-space:pre;text-align:right;width:58px">-1402.86<br>885.71</div>
<div class="a" style="left:1279px;top:683px;font-size:12px">Z:</div>
<div class="entry" style="left:1290px;top:679px;width:45px;height:21px;line-height:19px;font-size:12px;padding-left:9px">35%</div>
<div class="spin" style="left:1336px;top:680px;height:19px"></div>
<svg class="a" style="left:1352px;top:690px" width="10" height="10" viewBox="0 0 10 10"><path d="M9 1v8M5 5v4M1 9h8M9 5H5" stroke="#aaa" stroke-dasharray="1 1"/></svg>
<div class="a" style="left:0;top:704px;width:1364px;height:9px;background:linear-gradient(90deg,#3e2220,#4a2a24 20%,#55301f 40%,#6a3a22 58%,#4e3a4a 66%,#5a4a5a 70%,#8a6a4a 73%,#6a3a2a 78%,#4a2a28 85%,#3a2222)"></div>
<div class="a" style="left:0;top:704px;width:1364px;height:1px;background:#1a1010"></div>
<svg class="a" style="left:12px;top:705px" width="30" height="8" viewBox="0 0 30 8"><ellipse cx="15" cy="10" rx="13" ry="9" fill="#8aa0b8" stroke="#c0d0e0"/></svg>
<svg class="a" style="left:140px;top:706px" width="12" height="7" viewBox="0 0 12 7"><path d="M6 0l6 7H0z" fill="#3a70b0"/></svg>
<svg class="a" style="left:200px;top:706px" width="26" height="7" viewBox="0 0 26 7"><ellipse cx="13" cy="10" rx="12" ry="9" fill="#60b0e0"/></svg>
<svg class="a" style="left:262px;top:706px" width="12" height="7" viewBox="0 0 12 7"><rect x="0" y="1" width="12" height="6" fill="#e8e8d8"/><rect x="2" y="0" width="3" height="2" fill="#3a3"/></svg>
<div class="a" style="left:308px;top:705px;width:57px;height:8px;background:linear-gradient(#d8d0cc,#b8a8a4);border-radius:3px 3px 0 0"></div>
<svg class="a" style="left:325px;top:707px" width="20" height="6" viewBox="0 0 20 6"><ellipse cx="10" cy="8" rx="9" ry="6" fill="#d03020"/></svg>
<svg class="a" style="left:385px;top:706px" width="20" height="7" viewBox="0 0 20 7"><ellipse cx="10" cy="8" rx="9" ry="6" fill="#f0f0f0"/><ellipse cx="10" cy="9" rx="5" ry="5" fill="#d02020"/></svg>
<svg class="a" style="left:455px;top:707px" width="14" height="6" viewBox="0 0 14 6"><path d="M0 0l14 6H0z" fill="#70c030"/></svg>
<div class="a" style="left:494px;top:705px;width:58px;height:8px;background:linear-gradient(#f4f0ee,#dcd4d0);border-radius:3px 3px 0 0"></div>
<svg class="a" style="left:513px;top:706px" width="16" height="7" viewBox="0 0 16 7"><path d="M2 7l6-6 6 6" fill="#fff" stroke="#111" stroke-width="1.4"/></svg>
<div class="a" style="left:1290px;top:708px;font-size:9px;line-height:9px;color:#fff;font-weight:bold">0:00 PM</div>
<div class="a" style="left:1352px;top:705px;width:12px;height:8px;background:linear-gradient(90deg,#888,#aaa)"></div>
</body></html>
